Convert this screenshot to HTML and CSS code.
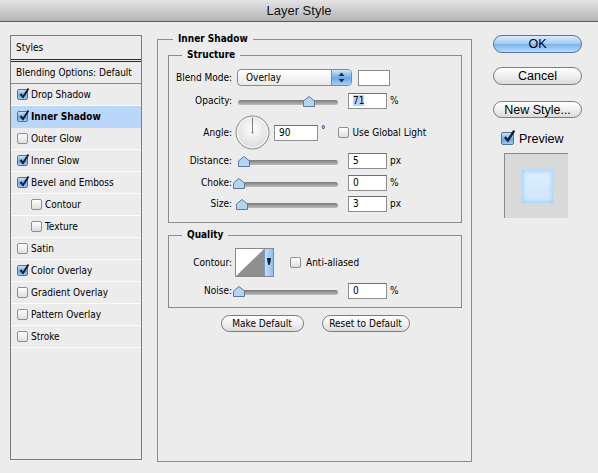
FILE: index.html
```html
<!DOCTYPE html>
<html>
<head>
<meta charset="utf-8">
<title>Layer Style</title>
<link rel="stylesheet" href="styles.css">
</head>
<body>
<div class="titlebar">Layer Style</div>
<div class="dialog">
  <aside class="styles-list">
    <div class="list-head">Styles</div>
    <div class="list-blend">Blending Options: Default</div>
    <div class="item"><span class="cb on"><svg viewBox="0 0 12 12"><path d="M2.5 6 L5 9 L10.5 0.5"/></svg></span>Drop Shadow</div>
    <div class="item selected"><span class="cb on"><svg viewBox="0 0 12 12"><path d="M2.5 6 L5 9 L10.5 0.5"/></svg></span><b>Inner Shadow</b></div>
    <div class="item"><span class="cb"></span>Outer Glow</div>
    <div class="item"><span class="cb on"><svg viewBox="0 0 12 12"><path d="M2.5 6 L5 9 L10.5 0.5"/></svg></span>Inner Glow</div>
    <div class="item"><span class="cb on"><svg viewBox="0 0 12 12"><path d="M2.5 6 L5 9 L10.5 0.5"/></svg></span>Bevel and Emboss</div>
    <div class="item sub"><span class="cb"></span>Contour</div>
    <div class="item sub"><span class="cb"></span>Texture</div>
    <div class="item"><span class="cb"></span>Satin</div>
    <div class="item"><span class="cb on"><svg viewBox="0 0 12 12"><path d="M2.5 6 L5 9 L10.5 0.5"/></svg></span>Color Overlay</div>
    <div class="item"><span class="cb"></span>Gradient Overlay</div>
    <div class="item"><span class="cb"></span>Pattern Overlay</div>
    <div class="item"><span class="cb"></span>Stroke</div>
  </aside>

  <fieldset class="group outer">
    <legend>Inner Shadow</legend>
    <fieldset class="group structure">
      <legend>Structure</legend>
      <div class="field blend-row">
        <span class="label">Blend Mode:</span>
        <div class="select"><span class="select-text">Overlay</span><span class="select-arrows"><svg viewBox="0 0 19 15"><path d="M6.5 6 L9.5 2.5 L12.5 6 Z M6.5 9 L9.5 12.5 L12.5 9 Z"/></svg></span></div>
        <span class="swatch"></span>
      </div>
      <div class="field opacity-row">
        <span class="label">Opacity:</span>
        <div class="slider"><div class="track"></div><svg class="thumb" style="left:65px" viewBox="0 0 12 11"><path d="M0.5 5 L6 0.5 L11.5 5 L11.5 10.5 L0.5 10.5 Z"/></svg></div>
        <span class="num"><span class="sel">71</span></span><span class="unit">%</span>
      </div>
      <div class="field angle-row">
        <span class="label">Angle:</span>
        <svg class="dial" viewBox="0 0 36 36">
          <defs><radialGradient id="dg" cx="50%" cy="40%" r="60%"><stop offset="0" stop-color="#ffffff"/><stop offset="1" stop-color="#d9d9d9"/></radialGradient></defs>
          <circle cx="18" cy="18" r="17" fill="url(#dg)" stroke="#8c8c8c" stroke-width="1"/>
          <circle cx="18" cy="18" r="15.5" fill="none" stroke="#f8f8f8" stroke-width="1"/>
          <line x1="18" y1="18" x2="18" y2="2.5" stroke="#7a7a7a" stroke-width="1"/>
          <circle cx="18" cy="18" r="1" fill="#7a7a7a"/>
        </svg>
        <span class="num wide">90</span><span class="deg">°</span>
        <span class="cb global"></span><span class="cb-text">Use Global Light</span>
      </div>
      <div class="field distance-row">
        <span class="label">Distance:</span>
        <div class="slider"><div class="track"></div><svg class="thumb" style="left:0px" viewBox="0 0 12 11"><path d="M0.5 5 L6 0.5 L11.5 5 L11.5 10.5 L0.5 10.5 Z"/></svg></div>
        <span class="num">5</span><span class="unit">px</span>
      </div>
      <div class="field choke-row">
        <span class="label">Choke:</span>
        <div class="slider"><div class="track"></div><svg class="thumb" style="left:-5px" viewBox="0 0 12 11"><path d="M0.5 5 L6 0.5 L11.5 5 L11.5 10.5 L0.5 10.5 Z"/></svg></div>
        <span class="num">0</span><span class="unit">%</span>
      </div>
      <div class="field size-row">
        <span class="label">Size:</span>
        <div class="slider"><div class="track"></div><svg class="thumb" style="left:-2px" viewBox="0 0 12 11"><path d="M0.5 5 L6 0.5 L11.5 5 L11.5 10.5 L0.5 10.5 Z"/></svg></div>
        <span class="num">3</span><span class="unit">px</span>
      </div>
    </fieldset>

    <fieldset class="group quality">
      <legend>Quality</legend>
      <div class="field contour-row">
        <span class="label">Contour:</span>
        <div class="contour">
          <svg class="contour-pic" viewBox="0 0 29 27" preserveAspectRatio="none"><rect width="29" height="27" fill="#ffffff"/><path d="M0 27 L29 0 L29 27 Z" fill="#8f8f8f"/></svg>
          <span class="contour-arrow"><svg viewBox="0 0 8 27"><path d="M2 9 L6 9 L5.5 13 L4.6 16 L3.4 16 L2.5 13 Z" /></svg></span>
        </div>
        <span class="cb anti"></span><span class="cb-text">Anti-aliased</span>
      </div>
      <div class="field noise-row">
        <span class="label">Noise:</span>
        <div class="slider"><div class="track"></div><svg class="thumb" style="left:-5px" viewBox="0 0 12 11"><path d="M0.5 5 L6 0.5 L11.5 5 L11.5 10.5 L0.5 10.5 Z"/></svg></div>
        <span class="num">0</span><span class="unit">%</span>
      </div>
    </fieldset>

    <div class="defaults">
      <button class="pill make">Make Default</button>
      <button class="pill reset">Reset to Default</button>
    </div>
  </fieldset>

  <div class="actions">
    <button class="aqua ok">OK</button>
    <button class="aqua cancel">Cancel</button>
    <button class="aqua newstyle">New Style...</button>
    <div class="preview-toggle"><span class="cb big on"><svg viewBox="0 0 12 12"><path d="M2.5 6 L5 9 L10.5 0.5"/></svg></span>Preview</div>
    <div class="preview"><div class="preview-square"></div></div>
  </div>
</div>
</body>
</html>
```

FILE: styles.css
```css
html, body {
  margin: 0;
  padding: 0;
}
body {
  width: 598px;
  height: 473px;
  overflow: hidden;
  background: #ececec;
  color: #000;
  font-family: "DejaVu Sans", "Liberation Sans", sans-serif;
  font-stretch: condensed;
  font-size: 10px;
  line-height: 12px;
}

.titlebar {
  height: 22px;
  box-sizing: border-box;
  border-bottom: 1px solid #5a5a5a;
  background: linear-gradient(#e4e4e4, #b4b4b4);
  text-align: center;
  font-family: "Liberation Sans", sans-serif;
  font-stretch: normal;
  font-size: 13px;
  line-height: 21px;
  color: #111;
}

.dialog {
  display: flex;
  align-items: flex-start;
}

/* ---------- left list ---------- */
.styles-list {
  margin: 13px 0 0 10px;
  width: 132px;
  height: 425px;
  box-sizing: border-box;
  border: 1px solid #7c7c7c;
  background: #ececec;
}
.list-head {
  height: 23px;
  border-bottom: 3px double #2a2a2a;
  padding-left: 5px;
  display: flex;
  align-items: center;
}
.list-blend {
  height: 21px;
  border-bottom: 1px solid #8a8a8a;
  padding-left: 5px;
  display: flex;
  align-items: center;
}
.item {
  height: 22px;
  box-sizing: border-box;
  border-bottom: 1px solid #fbfbfb;
  display: flex;
  align-items: center;
  padding-left: 6px;
  gap: 3px;
}
.item.sub {
  padding-left: 20px;
}
.item.selected {
  background: #bad6f8;
  border-bottom-color: #bad6f8;
}
.item b {
  font-weight: bold;
}

/* ---------- checkboxes ---------- */
.cb {
  position: relative;
  flex: none;
  width: 11px;
  height: 11px;
  box-sizing: border-box;
  border: 1px solid #8e8e8e;
  border-radius: 2px;
  background: linear-gradient(#ffffff, #dedede);
}
.cb.on {
  border-color: #53769f;
  background: linear-gradient(#c9e1fa, #6fa7e4 60%, #9ccaf4);
}
.cb svg {
  position: absolute;
  left: 0;
  top: -2px;
  width: 12px;
  height: 12px;
  overflow: visible;
}
.cb svg path {
  fill: none;
  stroke: #15213a;
  stroke-width: 2;
}
.cb.big {
  width: 13px;
  height: 13px;
}
.cb.big svg {
  width: 14px;
  height: 14px;
  top: -3px;
}
.cb-text {
  margin-left: 4px;
}

/* ---------- fieldsets ---------- */
.group {
  margin: 0;
  border: 1px solid #8c8c8c;
  min-width: 0;
  box-sizing: border-box;
}
.group legend {
  font-weight: bold;
  padding: 0 5px;
  line-height: 12px;
}
.outer {
  margin: 11px 0 0 15px;
  width: 315px;
  height: 429px;
  padding: 0 9px 0 10px;
}
.outer > legend {
  margin-left: 5px;
}
.structure {
  margin-top: 4px;
  width: 294px;
  padding: 8px 0 10px 0;
}
.structure > legend,
.quality > legend {
  margin-left: 13px;
}
.quality {
  margin-top: 6px;
  width: 294px;
  padding: 7px 0 8px 0;
}

.field {
  display: flex;
  align-items: center;
}
.label {
  flex: none;
  width: 63px;
  margin-right: 5px;
  text-align: right;
}
.opacity-row { margin-top: 7px; }
.angle-row { margin-top: 6px; }
.distance-row { margin-top: 3px; }
.choke-row { margin-top: 6px; }
.size-row { margin-top: 5px; }
.noise-row { margin-top: 6px; }

/* select */
.select {
  width: 115px;
  height: 17px;
  box-sizing: border-box;
  border: 1px solid #8a8a8a;
  border-radius: 4px;
  background: linear-gradient(#ffffff, #e9e9e9);
  display: flex;
  overflow: hidden;
}
.select-text {
  flex: 1;
  padding-left: 8px;
  line-height: 15px;
}
.select-arrows {
  width: 19px;
  border-left: 1px solid #6f8fb5;
  background: linear-gradient(#cfe5fb, #6aa7e6 55%, #a8d0f6);
}
.select-arrows svg {
  display: block;
  width: 19px;
  height: 15px;
}
.select-arrows path {
  fill: #1c2a40;
}
.swatch {
  margin-left: 6px;
  width: 32px;
  height: 16px;
  box-sizing: border-box;
  border: 1px solid #8a8a8a;
  background: #fff;
}

/* slider */
.slider {
  position: relative;
  flex: none;
  width: 100px;
  height: 11px;
  margin-left: 1px;
  margin-right: 10px;
}
.track {
  margin-top: 4px;
  height: 5px;
  border-radius: 3px;
  background: linear-gradient(#7a7a7a, #a2a2a2 60%, #bdbdbd);
}
.thumb {
  position: absolute;
  top: 0;
  width: 12px;
  height: 11px;
}
.thumb path {
  fill: #b3d4f2;
  stroke: #62799a;
  stroke-width: 1;
}

/* numeric input */
.num {
  flex: none;
  width: 39px;
  height: 16px;
  box-sizing: border-box;
  border: 1px solid #8e8e8e;
  border-top-color: #6e6e6e;
  background: #fff;
  padding-left: 4px;
  line-height: 14px;
}
.num.wide {
  width: 44px;
}
.sel {
  background: #b5d5ff;
}
.unit {
  margin-left: 3px;
}
.deg {
  margin-left: 3px;
  align-self: flex-start;
  margin-top: 9px;
}
.dial {
  flex: none;
  width: 35px;
  height: 35px;
  margin-left: -2px;
  margin-right: 4px;
}
.cb.global {
  margin-left: 12px;
}

/* contour */
.contour {
  flex: none;
  margin-left: -2px;
  width: 39px;
  height: 29px;
  box-sizing: border-box;
  border: 1px solid #8a8a8a;
  display: flex;
}
.contour-pic {
  width: 29px;
  height: 27px;
  display: block;
}
.contour-arrow {
  flex: 1;
  border-left: 1px solid #7a9bc2;
  background: linear-gradient(90deg, #c3ddf8, #8fbff0);
}
.contour-arrow svg {
  display: block;
  width: 8px;
  height: 27px;
}
.contour-arrow path {
  fill: #14203a;
}
.cb.anti {
  margin-left: 16px;
}
.cb.anti + .cb-text {
  margin-left: 5px;
}

/* default buttons */
.defaults {
  margin-top: 7px;
  display: flex;
  justify-content: center;
  gap: 18px;
}
.pill {
  height: 17px;
  padding: 0;
  border: 1px solid #7a7a7a;
  border-radius: 9px;
  background: linear-gradient(#ffffff, #f1f1f1 50%, #dcdcdc);
  font-family: inherit;
  font-stretch: condensed;
  font-size: 10px;
  color: #000;
}
.pill.make { width: 83px; }
.pill.reset { width: 88px; }

/* right column */
.actions {
  margin: 13px 0 0 21px;
  width: 89px;
  display: flex;
  flex-direction: column;
}
.aqua {
  width: 89px;
  height: 18px;
  padding: 0;
  border: 1px solid #7d7d7d;
  border-radius: 9px;
  background: linear-gradient(#ffffff, #f0f0f0 50%, #dadada);
  font-family: "Liberation Sans", sans-serif;
  font-size: 12.5px;
  line-height: 16px;
  color: #000;
}
.aqua.ok {
  border-color: #55739b;
  background: linear-gradient(#dbecfc, #a9cff5 45%, #7db5ec 55%, #b8dcfa);
}
.aqua.cancel { margin-top: 14px; }
.aqua.newstyle { margin-top: 16px; height: 17px; }
.preview-toggle {
  margin: 14px 0 0 8px;
  display: flex;
  align-items: center;
  gap: 5px;
  font-family: "Liberation Sans", sans-serif;
  font-size: 12.5px;
}
.preview {
  margin: 8px 0 0 11px;
  width: 64px;
  height: 65px;
  box-sizing: border-box;
  border-top: 1px solid #8a8a8a;
  border-left: 1px solid #8a8a8a;
  background: #d9d9d9;
  display: flex;
  align-items: center;
  justify-content: center;
}
.preview-square {
  width: 31px;
  height: 33px;
  margin-left: 1px;
  background: linear-gradient(#dcefff, #cfe6fb);
  box-shadow: inset 0 0 4px 1px #9fcff4, 0 0 3px #b8dcf6;
}
```
